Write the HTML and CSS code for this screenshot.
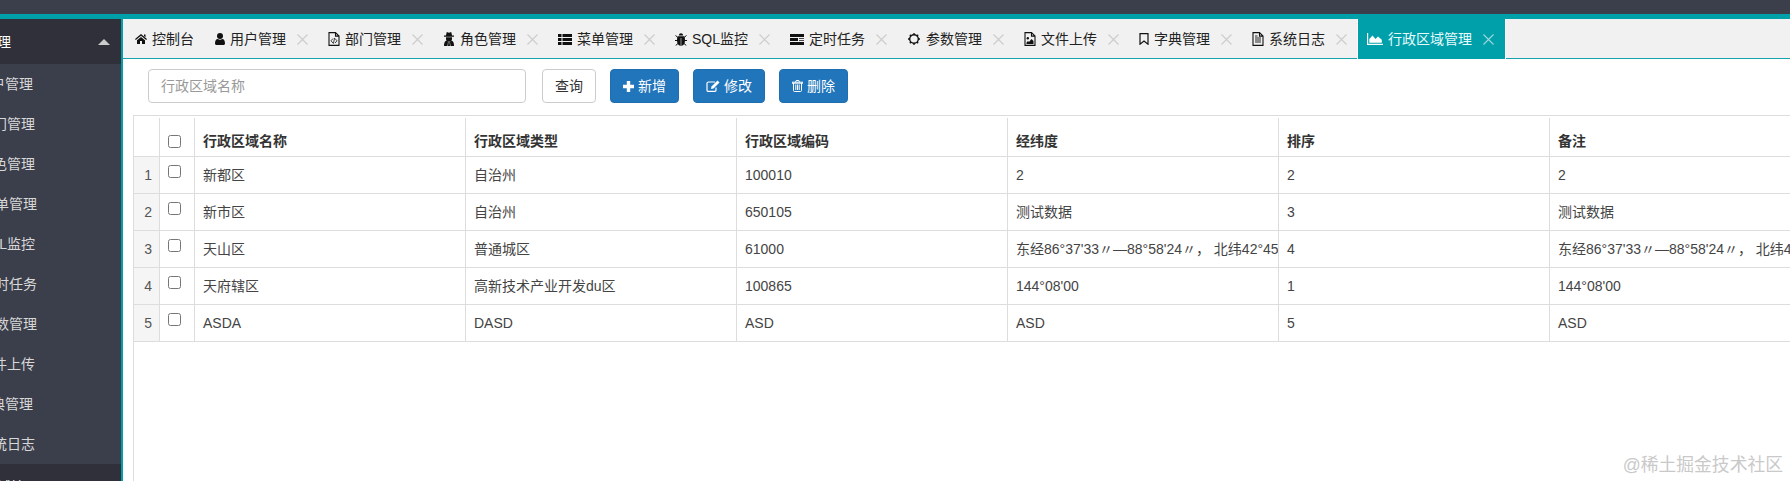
FILE: index.html
```html
<!DOCTYPE html>
<html lang="zh-CN">
<head>
  <meta charset="UTF-8" />
  <title>行政区域管理</title>
  <link rel="stylesheet" href="styles.css">
</head>
<body>
  <svg class="sprite" xmlns="http://www.w3.org/2000/svg">
    <symbol id="i-home" viewBox="0 0 12 10">
      <path d="M6 0 12 5 11.2 6 6 1.8.8 6 0 5zM9 .6h1.5v2.6L9 2zM2 6.2 6 3l4 3.2V10H7V7H5v3H2z"/>
    </symbol>
    <symbol id="i-user" viewBox="0 0 10 12">
      <circle cx="5" cy="3" r="3"/>
      <path d="M0 10.6C0 7.8 1 6 2.8 6c1.300.9 3.100.9 4.400 0C9 6 10 7.800 10 10.600c0 .9-.5 1.400-1.300 1.400H1.300C.5 12 0 11.500 0 10.600z"/>
    </symbol>
    <symbol id="i-code" viewBox="0 0 12 14">
      <path d="M1 .6h6.500L11 4.100v9.300H1zM7.500.6v3.500H11" fill="none" stroke="currentColor" stroke-width="1.100"/>
      <path d="M5 6.500 3 8.800l2 2.300M7 6.500l2 2.300-2 2.300M6.600 6 5.400 11.600" fill="none" stroke="currentColor" stroke-width=".8"/>
    </symbol>
    <symbol id="i-secret" viewBox="0 0 12 14">
      <path d="M3.800 0 6 .7 8.200 0l.9 3.600H11v1.200H1V3.600h1.900z"/>
      <path d="M3 5.300h6V6.800A3 3 0 0 1 3 6.800zM1 14c0-3 .5-4.800 2.500-5.600L5 10l-.5 4zM11 14c0-3-.5-4.800-2.500-5.600L7 10l.5 4zM5.400 10h1.200l.4 4H5z"/>
    </symbol>
    <symbol id="i-list" viewBox="0 0 14 11">
      <path d="M0 0h3.500v3H0zM4.500 0H14v3H4.500zM0 4h3.500v3H0zM4.500 4H14v3H4.500zM0 8h3.500v3H0zM4.500 8H14v3H4.500z"/>
    </symbol>
    <symbol id="i-bug" viewBox="0 0 12 13">
      <path d="M3.800 2.500C4 1 5 .3 6 .3s2 .7 2.200 2.200zM3 3.300h6c.9 1.200 1 2.500 1 4.500 0 3-1.700 5-4 5s-4-2-4-5c0-2 .1-3.300 1-4.500z"/>
      <path d="M.5 2.500 3 4.500M11.500 2.500 9 4.500M0 7.500h2M10 7.500h2M.7 12.500 3 10.500M11.300 12.500 9 10.500" fill="none" stroke="currentColor" stroke-width="1"/>
      <path d="M5.700 5h.6v7.500h-.6z" fill="#f1f1f1"/>
    </symbol>
    <symbol id="i-tasks" viewBox="0 0 14 11">
      <path d="M0 0h14v3H0zM0 4h8v3H0zM9 4h5v.8H9zM9 6.200h5V7H9zM0 8h14v3H0z"/>
    </symbol>
    <symbol id="i-gear" viewBox="0 0 14 12">
      <circle cx="7" cy="6" r="4.300" fill="none" stroke="currentColor" stroke-width="1.400"/>
      <path d="M7 0v2M7 10v2M1 6h2M11 6h2M2.800 1.800l1.400 1.400M9.800 8.800l1.400 1.400M2.800 10.200l1.400-1.400M9.800 3.200l1.400-1.400" stroke="currentColor" stroke-width="1.300"/>
    </symbol>
    <symbol id="i-image" viewBox="0 0 12 14">
      <path d="M1 .6h6.500L11 4.100v9.300H1zM7.500.6v3.500H11" fill="none" stroke="currentColor" stroke-width="1.100"/>
      <circle cx="3.800" cy="6.200" r="1.200"/>
      <path d="M2.500 12V10.500L4 9l1 1 2.500-3L9.500 9v3z"/>
    </symbol>
    <symbol id="i-mark" viewBox="0 0 10 12">
      <path d="M1 .6h8v10.600L5 8 1 11.200z" fill="none" stroke="currentColor" stroke-width="1.200"/>
    </symbol>
    <symbol id="i-text" viewBox="0 0 12 14">
      <path d="M1 .6h6.500L11 4.100v9.300H1zM7.500.6v3.500H11" fill="none" stroke="currentColor" stroke-width="1.100"/>
      <path d="M3 6h6M3 8h6M3 10h6M3 4h2.500" fill="none" stroke="currentColor" stroke-width=".9"/>
    </symbol>
    <symbol id="i-area" viewBox="0 0 16 12">
      <path d="M0 0h1.200v10.800H16V12H0zM2.300 9.800V6L5.500 2.500 8.500 6 11 3.500l3.800 3.300v3z"/>
    </symbol>
    <symbol id="i-close" viewBox="0 0 11 11">
      <path d="M.5.500l10 10M10.500.5l-10 10" fill="none" stroke="currentColor" stroke-width="1.100"/>
    </symbol>
    <symbol id="i-plus" viewBox="0 0 11 11">
      <path d="M3.800 0h3.400v3.800H11v3.400H7.200V11H3.800V7.200H0V3.800h3.800z"/>
    </symbol>
    <symbol id="i-edit" viewBox="0 0 14 12">
      <path d="M9 2H2.500C1.500 2 1 2.500 1 3.500v6.800c0 .7.300 1 1 1h7c.7 0 1-.3 1-1V7.500" fill="none" stroke="currentColor" stroke-width="1.200"/>
      <path d="M11.500.5 13.500 2.500 7.500 8.500 5 9l.5-2.500z"/>
    </symbol>
    <symbol id="i-trash" viewBox="0 0 11 12">
      <path d="M0 2.200h11v1H0zM3.500 2.200 4.200.5h2.600l.7 1.700M1.500 3v7.500c0 .7.300 1 1 1h6c.7 0 1-.3 1-1V3M3.800 4.500v5.500M5.500 4.500v5.500M7.200 4.500v5.500" fill="none" stroke="currentColor" stroke-width="1"/>
    </symbol>
  </svg>

  <div class="topbar"></div>

  <div class="layout">
    <aside class="sidebar">
      <div class="side-title"><span>系统管理</span><i class="caret"></i></div>
      <ul class="side-menu">
        <li><svg width="10" height="12"><use href="#i-user"/></svg>用户管理</li>
        <li><svg width="12" height="14"><use href="#i-code"/></svg>部门管理</li>
        <li><svg width="12" height="14"><use href="#i-secret"/></svg>角色管理</li>
        <li><svg width="14" height="11"><use href="#i-list"/></svg>菜单管理</li>
        <li><svg width="12" height="13"><use href="#i-bug"/></svg>SQL监控</li>
        <li><svg width="14" height="11"><use href="#i-tasks"/></svg>定时任务</li>
        <li><svg width="14" height="12"><use href="#i-gear"/></svg>参数管理</li>
        <li><svg width="12" height="14"><use href="#i-image"/></svg>文件上传</li>
        <li><svg width="10" height="12"><use href="#i-mark"/></svg>字典管理</li>
        <li><svg width="12" height="14"><use href="#i-text"/></svg>系统日志</li>
      </ul>
      <div class="side-title"><span>行政区域管理</span></div>
    </aside>

    <main class="content">
      <nav class="tabs">
        <div class="tab tab-home"><svg width="12" height="10"><use href="#i-home"/></svg>控制台</div>
        <div class="tab"><svg width="10" height="12"><use href="#i-user"/></svg>用户管理<svg class="close" width="11" height="11"><use href="#i-close"/></svg></div>
        <div class="tab"><svg width="12" height="14"><use href="#i-code"/></svg>部门管理<svg class="close" width="11" height="11"><use href="#i-close"/></svg></div>
        <div class="tab"><svg width="12" height="14"><use href="#i-secret"/></svg>角色管理<svg class="close" width="11" height="11"><use href="#i-close"/></svg></div>
        <div class="tab"><svg width="14" height="11"><use href="#i-list"/></svg>菜单管理<svg class="close" width="11" height="11"><use href="#i-close"/></svg></div>
        <div class="tab"><svg width="12" height="13"><use href="#i-bug"/></svg>SQL监控<svg class="close" width="11" height="11"><use href="#i-close"/></svg></div>
        <div class="tab"><svg width="14" height="11"><use href="#i-tasks"/></svg>定时任务<svg class="close" width="11" height="11"><use href="#i-close"/></svg></div>
        <div class="tab"><svg width="14" height="12"><use href="#i-gear"/></svg>参数管理<svg class="close" width="11" height="11"><use href="#i-close"/></svg></div>
        <div class="tab"><svg width="12" height="14"><use href="#i-image"/></svg>文件上传<svg class="close" width="11" height="11"><use href="#i-close"/></svg></div>
        <div class="tab"><svg width="10" height="12"><use href="#i-mark"/></svg>字典管理<svg class="close" width="11" height="11"><use href="#i-close"/></svg></div>
        <div class="tab"><svg width="12" height="14"><use href="#i-text"/></svg>系统日志<svg class="close" width="11" height="11"><use href="#i-close"/></svg></div>
        <div class="tab active"><svg width="16" height="12"><use href="#i-area"/></svg>行政区域管理<svg class="close" width="11" height="11"><use href="#i-close"/></svg></div>
      </nav>

      <div class="toolbar">
        <input class="search" type="text" placeholder="行政区域名称">
        <button class="btn">查询</button>
        <button class="btn btn-primary"><svg width="11" height="11"><use href="#i-plus"/></svg>新增</button>
        <button class="btn btn-primary"><svg width="14" height="12"><use href="#i-edit"/></svg>修改</button>
        <button class="btn btn-primary"><svg width="11" height="12"><use href="#i-trash"/></svg>删除</button>
      </div>

      <div class="table-wrap">
        <table class="grid">
          <colgroup>
            <col class="col-no"><col class="col-check"><col class="col-std"><col class="col-std"><col class="col-std"><col class="col-std"><col class="col-std">
            <col class="col-std">
          </colgroup>
          <thead>
            <tr>
              <th></th>
              <th><input type="checkbox"></th>
              <th>行政区域名称</th>
              <th>行政区域类型</th>
              <th>行政区域编码</th>
              <th>经纬度</th>
              <th>排序</th>
              <th>备注</th>
            </tr>
          </thead>
          <tbody>
            <tr>
              <td class="no">1</td><td><input type="checkbox"></td>
              <td>新都区</td><td>自治州</td><td>100010</td><td>2</td><td>2</td><td>2</td>
            </tr>
            <tr>
              <td class="no">2</td><td><input type="checkbox"></td>
              <td>新市区</td><td>自治州</td><td>650105</td><td>测试数据</td><td>3</td><td>测试数据</td>
            </tr>
            <tr>
              <td class="no">3</td><td><input type="checkbox"></td>
              <td>天山区</td><td>普通城区</td><td>61000</td><td>东经86°37'33〃—88°58'24〃， 北纬42°45'30〃</td><td>4</td><td>东经86°37'33〃—88°58'24〃， 北纬42°45'30〃</td>
            </tr>
            <tr>
              <td class="no">4</td><td><input type="checkbox"></td>
              <td>天府辖区</td><td>高新技术产业开发du区</td><td>100865</td><td>144°08'00</td><td>1</td><td>144°08'00</td>
            </tr>
            <tr>
              <td class="no">5</td><td><input type="checkbox"></td>
              <td>ASDA</td><td>DASD</td><td>ASD</td><td>ASD</td><td>5</td><td>ASD</td>
            </tr>
          </tbody>
        </table>
      </div>
    </main>
  </div>

  <div class="watermark">@稀土掘金技术社区</div>
</body>
</html>
```

FILE: styles.css
```css
* {
  box-sizing: border-box;
}
html, body {
  height: 100%;
}
body {
  margin: 0;
  display: flex;
  flex-direction: column;
  overflow: hidden;
  font-family: "Liberation Sans", "Noto Sans CJK SC", sans-serif;
  font-size: 14px;
  line-height: 20px;
  color: #333;
  background-color: #fff;
}
.sprite {
  display: none;
}
svg {
  fill: currentColor;
  flex-shrink: 0;
}

.topbar {
  height: 19px;
  flex-shrink: 0;
  background-color: #3b3e4b;
  border-bottom: 5px solid #00a0ab;
}
.layout {
  flex: 1;
  display: flex;
  min-height: 0;
}

/* sidebar is scrolled off to the left in the page */
.sidebar {
  width: 123px;
  flex-shrink: 0;
  overflow: hidden;
  background-color: #3b3e4b;
  border-right: 2px solid #00a0ab;
}
.side-title {
  height: 45px;
  margin-left: -45px;
  padding-right: 11px;
  display: flex;
  align-items: center;
  justify-content: space-between;
  color: #fff;
  background-color: #2f3039;
}
.caret {
  border-left: 6px solid transparent;
  border-right: 6px solid transparent;
  border-bottom: 6px solid #ccc;
}
.side-menu {
  list-style: none;
  margin: 0 0 0 -38px;
  padding: 0;
}
.side-menu li {
  height: 40px;
  display: flex;
  align-items: center;
  gap: 5px;
  color: #d8d8d8;
  white-space: nowrap;
}

.content {
  flex: 1;
  min-width: 0;
  display: flex;
  flex-direction: column;
  overflow: hidden;
}

.tabs {
  height: 40px;
  flex-shrink: 0;
  display: flex;
  padding-left: 2px;
  background-color: #f1f1f1;
  border-bottom: 1px solid #17a2ae;
}
.tab {
  height: 40px;
  padding: 0 10px;
  display: flex;
  align-items: center;
  gap: 5px;
  color: #222;
  white-space: nowrap;
}
.tab svg:first-child {
  color: #111;
}
.tab .close {
  margin-left: 6px;
  color: #ccc;
}
.tab-home {
  padding-right: 11px;
}
.tab.active {
  margin-left: 1px;
  padding: 0 11px 0 9px;
  color: #e8fbfb;
  background-color: #00a0ab;
  box-shadow: -1px 0 #fff, 1px 0 #fff;
}
.tab.active svg:first-child {
  color: #fff;
}
.tab.active .close {
  color: #9fd6da;
}

.toolbar {
  flex-shrink: 0;
  display: flex;
  gap: 14px;
  padding: 10px 0 12px 25px;
}
.search {
  width: 378px;
  height: 34px;
  margin-right: 2px;
  padding: 6px 12px;
  font: inherit;
  color: #555;
  border: 1px solid #ccc;
  border-radius: 4px;
}
.search::placeholder {
  color: #999;
}
.btn {
  height: 34px;
  padding: 0 12px;
  display: flex;
  align-items: center;
  gap: 4px;
  font: inherit;
  color: #333;
  background-color: #fff;
  border: 1px solid #ccc;
  border-radius: 4px;
}
.btn-primary {
  color: #fff;
  background-color: #2075bb;
  border-color: #1f6fb0;
}

.table-wrap {
  flex: 1;
  margin-left: 10px;
  overflow: hidden;
  border-top: 1px solid #ddd;
  border-left: 1px solid #ddd;
}
.grid {
  width: 1686px;
  table-layout: fixed;
  border-collapse: separate;
  border-spacing: 0;
}
.col-no { width: 25px; }
.col-check { width: 35px; }
.col-std { width: 271px; }

.grid th {
  height: 41px;
  padding: 15px 8px 5px 9px;
  text-align: left;
  vertical-align: top;
  white-space: nowrap;
  border-bottom: 1px solid #ddd;
  background: linear-gradient(#ddd, #ddd) left 2px / 1px 100% no-repeat;
}
.grid th:first-child {
  background: none;
}
.grid td {
  padding: 8px;
  vertical-align: top;
  color: #444;
  white-space: nowrap;
  overflow: hidden;
  border-bottom: 1px solid #ddd;
  border-left: 1px solid #ddd;
}
.grid td:first-child {
  border-left: none;
}
.grid td.no {
  padding: 8px 7px 8px 0;
  text-align: right;
  color: #555;
  background-color: #f5f5f5;
}
.grid input[type="checkbox"] {
  display: block;
  margin: 0;
}
.grid th input[type="checkbox"] {
  margin-top: 4px;
}

.watermark {
  position: absolute;
  right: 7px;
  bottom: 4px;
  font-size: 17.800px;
  line-height: 24px;
  color: #c9c9c9;
}
```
